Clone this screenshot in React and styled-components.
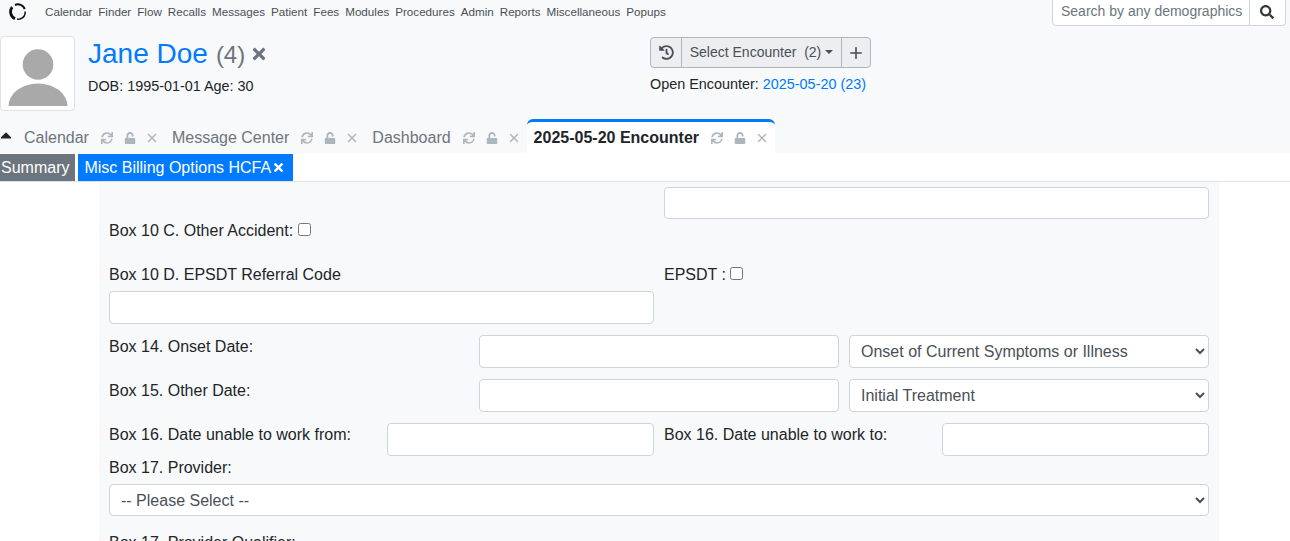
import React from 'react';
import styled, { createGlobalStyle } from 'styled-components';
import { FaCaretUp, FaHistory, FaSearch, FaSync, FaTimes, FaUnlock } from 'react-icons/fa';
import { Plus, X } from 'lucide-react';

const menuItems = [
  'Calendar', 'Finder', 'Flow', 'Recalls', 'Messages', 'Patient', 'Fees', 'Modules',
  'Procedures', 'Admin', 'Reports', 'Miscellaneous', 'Popups'
];

const tabs = [
  { title: 'Calendar' },
  { title: 'Message Center' },
  { title: 'Dashboard' },
  { title: '2025-05-20 Encounter', active: true }
];

const Logo = () => (
  <svg width="18" height="18" viewBox="0 0 18 18">
    <path d="M6 2 A7.4 7.4 0 0 1 15.8 6" fill="none" stroke="#111" strokeWidth="2" />
    <path d="M16.2 8.5 A7.4 7.4 0 0 1 11 16 L8 16.3" fill="none" stroke="#111" strokeWidth="1.5" />
    <path d="M6 15.6 A7.4 7.4 0 0 1 3.2 4.2" fill="none" stroke="#111" strokeWidth="2.8" />
  </svg>
);

const Avatar = () => (
  <svg width="64" height="64" viewBox="0 0 64 64">
    <circle cx="32" cy="22.5" r="15.3" fill="#a9a9a9" />
    <path d="M2.5 64 A29.5 22.5 0 0 1 61.5 64 Z" fill="#a9a9a9" />
  </svg>
);

export default function App() {
  return (
    <>
      <GlobalStyle />
      <Page>
        <TopBar>
          <LogoLink><Logo /></LogoLink>
          <Menu>
            {menuItems.map((item) => <MenuItem key={item}>{item}</MenuItem>)}
          </Menu>
          <Search>
            <SearchInput placeholder="Search by any demographics" />
            <SearchButton><FaSearch size={14} /></SearchButton>
          </Search>
        </TopBar>

        <PatientBar>
          <Thumbnail><Avatar /></Thumbnail>
          <PatientInfo>
            <PatientName>
              <NameLink>Jane Doe</NameLink> <PatientCount>(4)</PatientCount>
              <CloseName><FaTimes size={18} /></CloseName>
            </PatientName>
            <PatientDob>DOB: 1995-01-01 Age: 30</PatientDob>
          </PatientInfo>
          <EncounterBox>
            <ButtonGroup>
              <GroupButton $width={32}><FaHistory size={15} /></GroupButton>
              <GroupButton $width={161}>Select Encounter&nbsp; (2)<Caret /></GroupButton>
              <GroupButton $width={30}><Plus size={18} strokeWidth={2.2} /></GroupButton>
            </ButtonGroup>
            <OpenEncounter>Open Encounter: <EncounterLink>2025-05-20 (23)</EncounterLink></OpenEncounter>
          </EncounterBox>
        </PatientBar>

        <TabBar>
          <Collapse><FaCaretUp size={18} /></Collapse>
          {tabs.map((tab) => (
            <Tab key={tab.title} $active={tab.active}>
              <TabTitle $active={tab.active}>{tab.title}</TabTitle>
              <TabIcon><FaSync size={12} /></TabIcon>
              <TabIcon><FaUnlock size={12} /></TabIcon>
              <TabClose><X size={14} strokeWidth={2.4} /></TabClose>
            </Tab>
          ))}
        </TabBar>

        <Content>
          <SubTabs>
            <SubTab>Summary</SubTab>
            <SubTab $active>Misc Billing Options HCFA <SubClose><FaTimes size={13} /></SubClose></SubTab>
          </SubTabs>

          <Form>
            <Row $cols="1fr 1fr" $bottom={20}>
              <Label $top={37}>Box 10 C. Other Accident: <Check type="checkbox" /></Label>
              <Input $top={5} $height={32} />
            </Row>
            <Row $cols="1fr 1fr" $bottom={11}>
              <div>
                <Label $bottom={4}>Box 10 D. EPSDT Referral Code</Label>
                <Input />
              </div>
              <Label>EPSDT : <Check type="checkbox" /></Label>
            </Row>
            <Row $cols="1fr 1fr 1fr" $bottom={11}>
              <Label>Box 14. Onset Date:</Label>
              <Input />
              <Select defaultValue="onset">
                <option value="onset">Onset of Current Symptoms or Illness</option>
              </Select>
            </Row>
            <Row $cols="1fr 1fr 1fr" $bottom={11}>
              <Label>Box 15. Other Date:</Label>
              <Input />
              <Select defaultValue="initial">
                <option value="initial">Initial Treatment</option>
              </Select>
            </Row>
            <Row $cols="268px 267px 268px 267px" $bottom={0}>
              <Label>Box 16. Date unable to work from:</Label>
              <Input />
              <Label>Box 16. Date unable to work to:</Label>
              <Input />
            </Row>
            <Label $bottom={4}>Box 17. Provider:</Label>
            <Select $height={32} defaultValue="none">
              <option value="none">-- Please Select --</option>
            </Select>
            <Label $top={15}>Box 17. Provider Qualifier:</Label>
          </Form>
        </Content>
      </Page>
    </>
  );
}

const GlobalStyle = createGlobalStyle`
  html, body {
    margin: 0;
    height: 100%;
    overflow: hidden;
  }

  body {
    background-color: #fff;
    color: #212529;
    font-family: "Liberation Sans", Arial, sans-serif;
    font-size: 16px;
    line-height: 1.5;
  }

  * {
    box-sizing: border-box;
  }
`;

const Page = styled.div`
  height: 541px;
  overflow: hidden;
  background-color: #f8f9fa;
`;

const TopBar = styled.div`
  display: flex;
  align-items: center;
  height: 24px;
`;

const LogoLink = styled.a`
  display: flex;
  width: 45px;
  padding-left: 9px;
`;

const Menu = styled.nav`
  display: flex;
  gap: 6px;
  flex: 1;
`;

const MenuItem = styled.a`
  font-size: 11.65px;
  color: #495057;
  white-space: nowrap;
`;

const Search = styled.div`
  display: flex;
  align-self: flex-start;
  width: 234px;
  height: 29px;
  margin: -3px 4px 0 0;
`;

const SearchInput = styled.input`
  flex: 1;
  min-width: 0;
  padding: 0 0 0 8px;
  border: 1px solid #ced4da;
  border-radius: 0 0 0 4px;
  background-color: #fff;
  font: inherit;
  font-size: 14px;

  &::placeholder {
    color: #6c757d;
    opacity: 1;
  }
`;

const SearchButton = styled.button`
  display: flex;
  align-items: center;
  justify-content: center;
  width: 36px;
  padding: 0 2px 0 0;
  border: 1px solid #ced4da;
  border-left: 0;
  border-radius: 0 0 4px 0;
  background-color: #fff;
  color: #343a40;
`;

const PatientBar = styled.div`
  position: relative;
  display: flex;
  height: 96px;
  padding-top: 12px;
`;

const Thumbnail = styled.div`
  display: flex;
  align-items: flex-end;
  justify-content: center;
  width: 75px;
  height: 75px;
  padding: 4px;
  border: 1px solid #dee2e6;
  border-radius: 4px;
  background-color: #fff;
`;

const PatientInfo = styled.div`
  width: 575px;
  padding-left: 13px;
`;

const PatientName = styled.div`
  display: flex;
  align-items: baseline;
  gap: 8px;
  height: 36px;
  font-size: 28px;
  line-height: 36px;
`;

const NameLink = styled.a`
  color: #007bff;
`;

const PatientCount = styled.span`
  color: #6c757d;
  font-size: 24px;
`;

const CloseName = styled.span`
  display: flex;
  align-self: center;
  margin-left: -3px;
  color: #6c757d;
`;

const PatientDob = styled.div`
  margin-top: 2px;
  font-size: 14.4px;
  line-height: 24px;
`;

const EncounterBox = styled.div`
  padding-top: 1px;
`;

const ButtonGroup = styled.div`
  display: flex;
  height: 31px;
`;

const GroupButton = styled.button`
  display: flex;
  align-items: center;
  justify-content: center;
  width: ${(p) => p.$width}px;
  padding: 0;
  margin-left: -1px;
  border: 1px solid #adb5bd;
  background-color: #eceef0;
  color: #495057;
  font: inherit;
  font-size: 14px;
  white-space: nowrap;

  &:first-child {
    margin-left: 0;
    border-radius: 4px 0 0 4px;
  }

  &:last-child {
    border-radius: 0 4px 4px 0;
  }
`;

const Caret = styled.span`
  width: 0;
  height: 0;
  margin-left: 4px;
  margin-bottom: 2px;
  border-top: 4px solid #495057;
  border-left: 4px solid transparent;
  border-right: 4px solid transparent;
`;

const OpenEncounter = styled.div`
  margin-top: 4px;
  font-size: 14.4px;
  line-height: 24px;
`;

const EncounterLink = styled.a`
  color: #007bff;
`;

const TabBar = styled.div`
  display: flex;
  align-items: flex-end;
  height: 33px;
`;

const Collapse = styled.span`
  display: flex;
  align-items: center;
  width: 20px;
  height: 33px;
  margin-left: -3px;
  padding-bottom: 3px;
  color: #212529;
`;

const Tab = styled.div`
  display: flex;
  align-items: center;
  height: 34px;
  padding: 1px 6px 0 7px;
  border-top: 3px solid ${(p) => (p.$active ? '#007bff' : 'transparent')};
  border-radius: ${(p) => (p.$active ? '6px 6px 0 0' : '0')};
  background-color: ${(p) => (p.$active ? '#fff' : 'transparent')};
`;

const TabTitle = styled.span`
  margin-right: 1px;
  color: ${(p) => (p.$active ? '#212529' : '#6c757d')};
  font-weight: ${(p) => (p.$active ? 700 : 400)};
  white-space: nowrap;
`;

const TabIcon = styled.span`
  display: flex;
  margin-left: 11px;
  color: #adb5bd;
`;

const TabClose = styled.span`
  display: flex;
  margin-left: 9px;
  color: #adb5bd;
`;

const Content = styled.div`
  height: 388px;
  background-color: #fff;
`;

const SubTabs = styled.div`
  display: flex;
  gap: 3px;
  height: 29px;
  padding-top: 1px;
  border-bottom: 1px solid #dee2e6;
`;

const SubTab = styled.a`
  display: flex;
  align-items: center;
  height: 27px;
  padding: ${(p) => (p.$active ? '0 8px 0 6px' : '0 6px 0 1px')};
  background-color: ${(p) => (p.$active ? '#007bff' : '#6c757d')};
  color: #fff;
  white-space: pre;
`;

const SubClose = styled.span`
  display: flex;
  margin-left: -3px;
`;

const Form = styled.form`
  display: flex;
  flex-direction: column;
  width: 1120px;
  height: 359px;
  margin-left: 99px;
  padding: 0 10px;
  overflow: hidden;
  background-color: #f8f9fa;
`;

const Row = styled.div`
  display: grid;
  flex: none;
  grid-template-columns: ${(p) => p.$cols};
  column-gap: 10px;
  margin-bottom: ${(p) => p.$bottom}px;
`;

const Label = styled.label`
  display: block;
  flex: none;
  margin-top: ${(p) => p.$top || 0}px;
  margin-bottom: ${(p) => p.$bottom || 0}px;
  line-height: 24px;
`;

const Check = styled.input`
  width: 13px;
  height: 13px;
  margin: 0;
  vertical-align: 0;
`;

const Input = styled.input`
  display: block;
  width: 100%;
  height: ${(p) => p.$height || 33}px;
  margin-top: ${(p) => p.$top || 0}px;
  border: 1px solid #ced4da;
  border-radius: 4px;
  background-color: #fff;
`;

const Select = styled.select`
  display: block;
  flex: none;
  width: 100%;
  height: ${(p) => p.$height || 33}px;
  padding: 0 7px;
  border: 1px solid #ced4da;
  border-radius: 4px;
  background-color: #fff;
  color: #495057;
  font: inherit;
`;
